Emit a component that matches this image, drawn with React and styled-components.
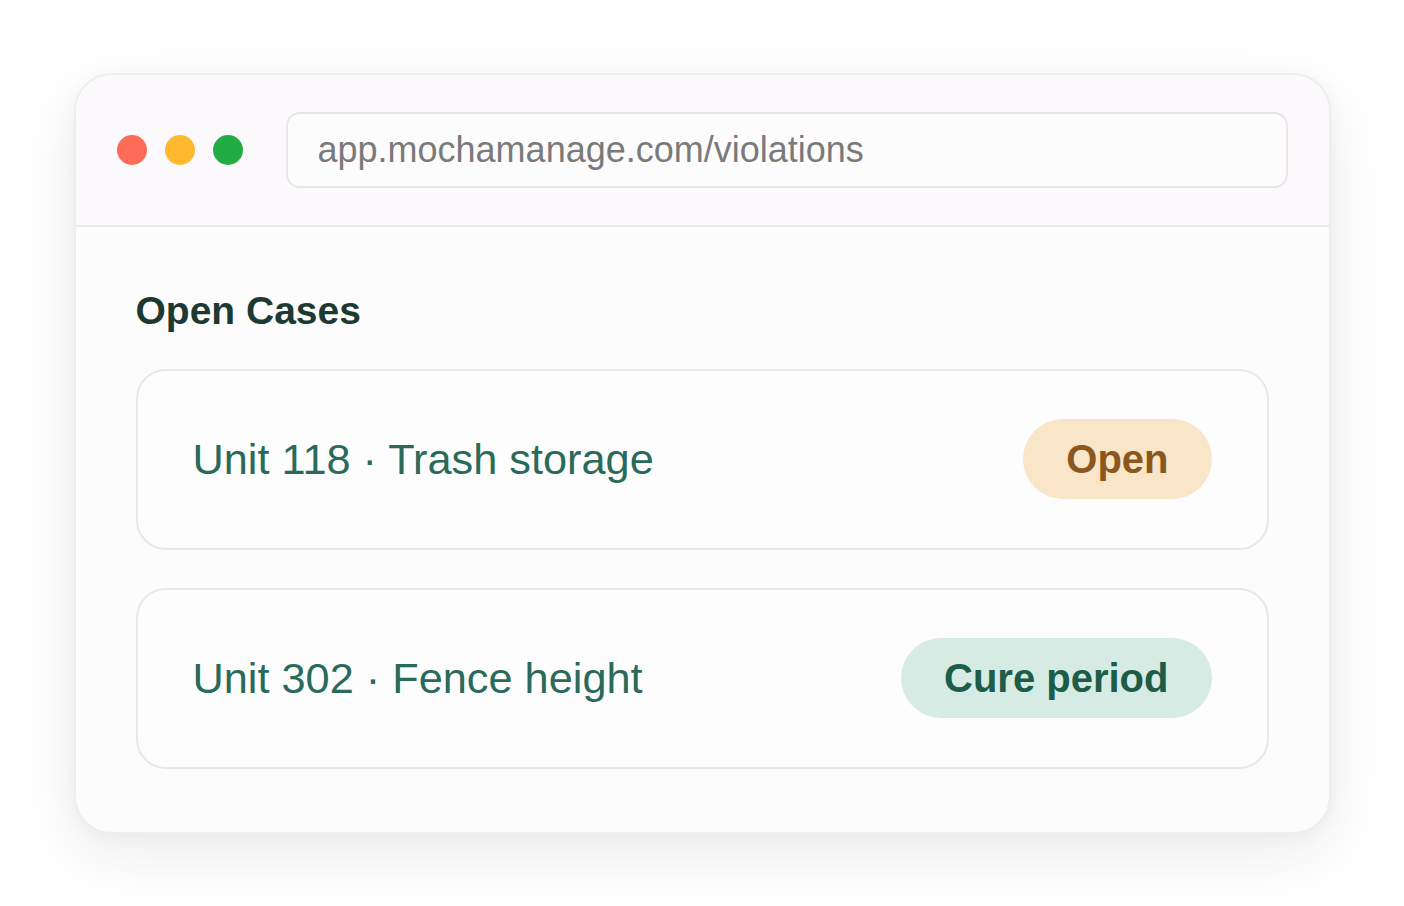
import React from 'react'
import styled, { createGlobalStyle } from 'styled-components';

const GlobalStyle = createGlobalStyle`
    html, body {
        margin: 0;
        padding: 0;
        background: #ffffff;
        font-family: "Liberation Sans", Arial, sans-serif;
    }
`;

const Page = styled.main`
    display: flex;
    align-items: center;
    justify-content: center;
    width: 100%;
    height: 906px;
    box-sizing: border-box;
`;

const BrowserWindow = styled.section`
    width: 1257px;
    box-sizing: border-box;
    background: #fcfcfc;
    border: 2px solid #efedef;
    border-radius: 38px;
    overflow: hidden;
    box-shadow: 0 20px 60px rgba(30, 20, 30, 0.08), 0 4px 18px rgba(30, 20, 30, 0.04);
`;

const TitleBar = styled.header`
    display: flex;
    align-items: center;
    height: 152px;
    box-sizing: border-box;
    padding: 0 41px;
    background: #fbf9fb;
    border-bottom: 2px solid #ece9ec;
`;

const Dots = styled.div`
    display: flex;
    gap: 18px;
    margin-right: 43px;
`;

const Dot = styled.span`
    width: 30px;
    height: 30px;
    border-radius: 50%;
    background: ${(p) => p.$color};
`;

const AddressBar = styled.div`
    flex: 1;
    height: 76px;
    box-sizing: border-box;
    display: flex;
    align-items: center;
    padding: 0 30px;
    background: #fdfcfd;
    border: 2px solid #e9e5e9;
    border-radius: 14px;
    color: #7a7a7a;
    font-size: 36px;
`;

const Content = styled.div`
    padding: 62px 60px 63px;
`;

const Heading = styled.h2`
    margin: 0 0 36px;
    font-size: 39px;
    font-weight: 700;
    color: #1e3832;
    line-height: 44px;
`;

const CaseList = styled.div`
    display: flex;
    flex-direction: column;
    gap: 38px;
`;

const CaseCard = styled.div`
    display: flex;
    align-items: center;
    justify-content: space-between;
    height: 181px;
    box-sizing: border-box;
    padding: 0 55px;
    background: #fdfdfd;
    border: 2px solid #e9e7e9;
    border-radius: 30px;
`;

const CaseTitle = styled.span`
    font-size: 43.3px;
    color: #2a6a5a;
`;

const Badge = styled.span`
    display: inline-flex;
    align-items: center;
    height: 80px;
    padding: 0 43px;
    border-radius: 40px;
    font-size: 40px;
    font-weight: 700;
    background: ${(p) => (p.$tone === 'green' ? '#d6ebe3' : '#f9e5c8')};
    color: ${(p) => (p.$tone === 'green' ? '#1c5c48' : '#8a5720')};
`;

const cases = [
    { id: 1, title: 'Unit 118 · Trash storage', status: 'Open', tone: 'amber' },
    { id: 2, title: 'Unit 302 · Fence height', status: 'Cure period', tone: 'green' },
];

const App = () => {
  return (
      <Page>
          <GlobalStyle />
          <BrowserWindow>
              <TitleBar>
                  <Dots>
                      <Dot $color="#fe6b57" />
                      <Dot $color="#feb92e" />
                      <Dot $color="#22ad44" />
                  </Dots>
                  <AddressBar>app.mochamanage.com/violations</AddressBar>
              </TitleBar>
              <Content>
                  <Heading>Open Cases</Heading>
                  <CaseList>
                      {cases.map((c) => (
                          <CaseCard key={c.id}>
                              <CaseTitle>{c.title}</CaseTitle>
                              <Badge $tone={c.tone}>{c.status}</Badge>
                          </CaseCard>
                      ))}
                  </CaseList>
              </Content>
          </BrowserWindow>
      </Page>
  )
}

export default App
